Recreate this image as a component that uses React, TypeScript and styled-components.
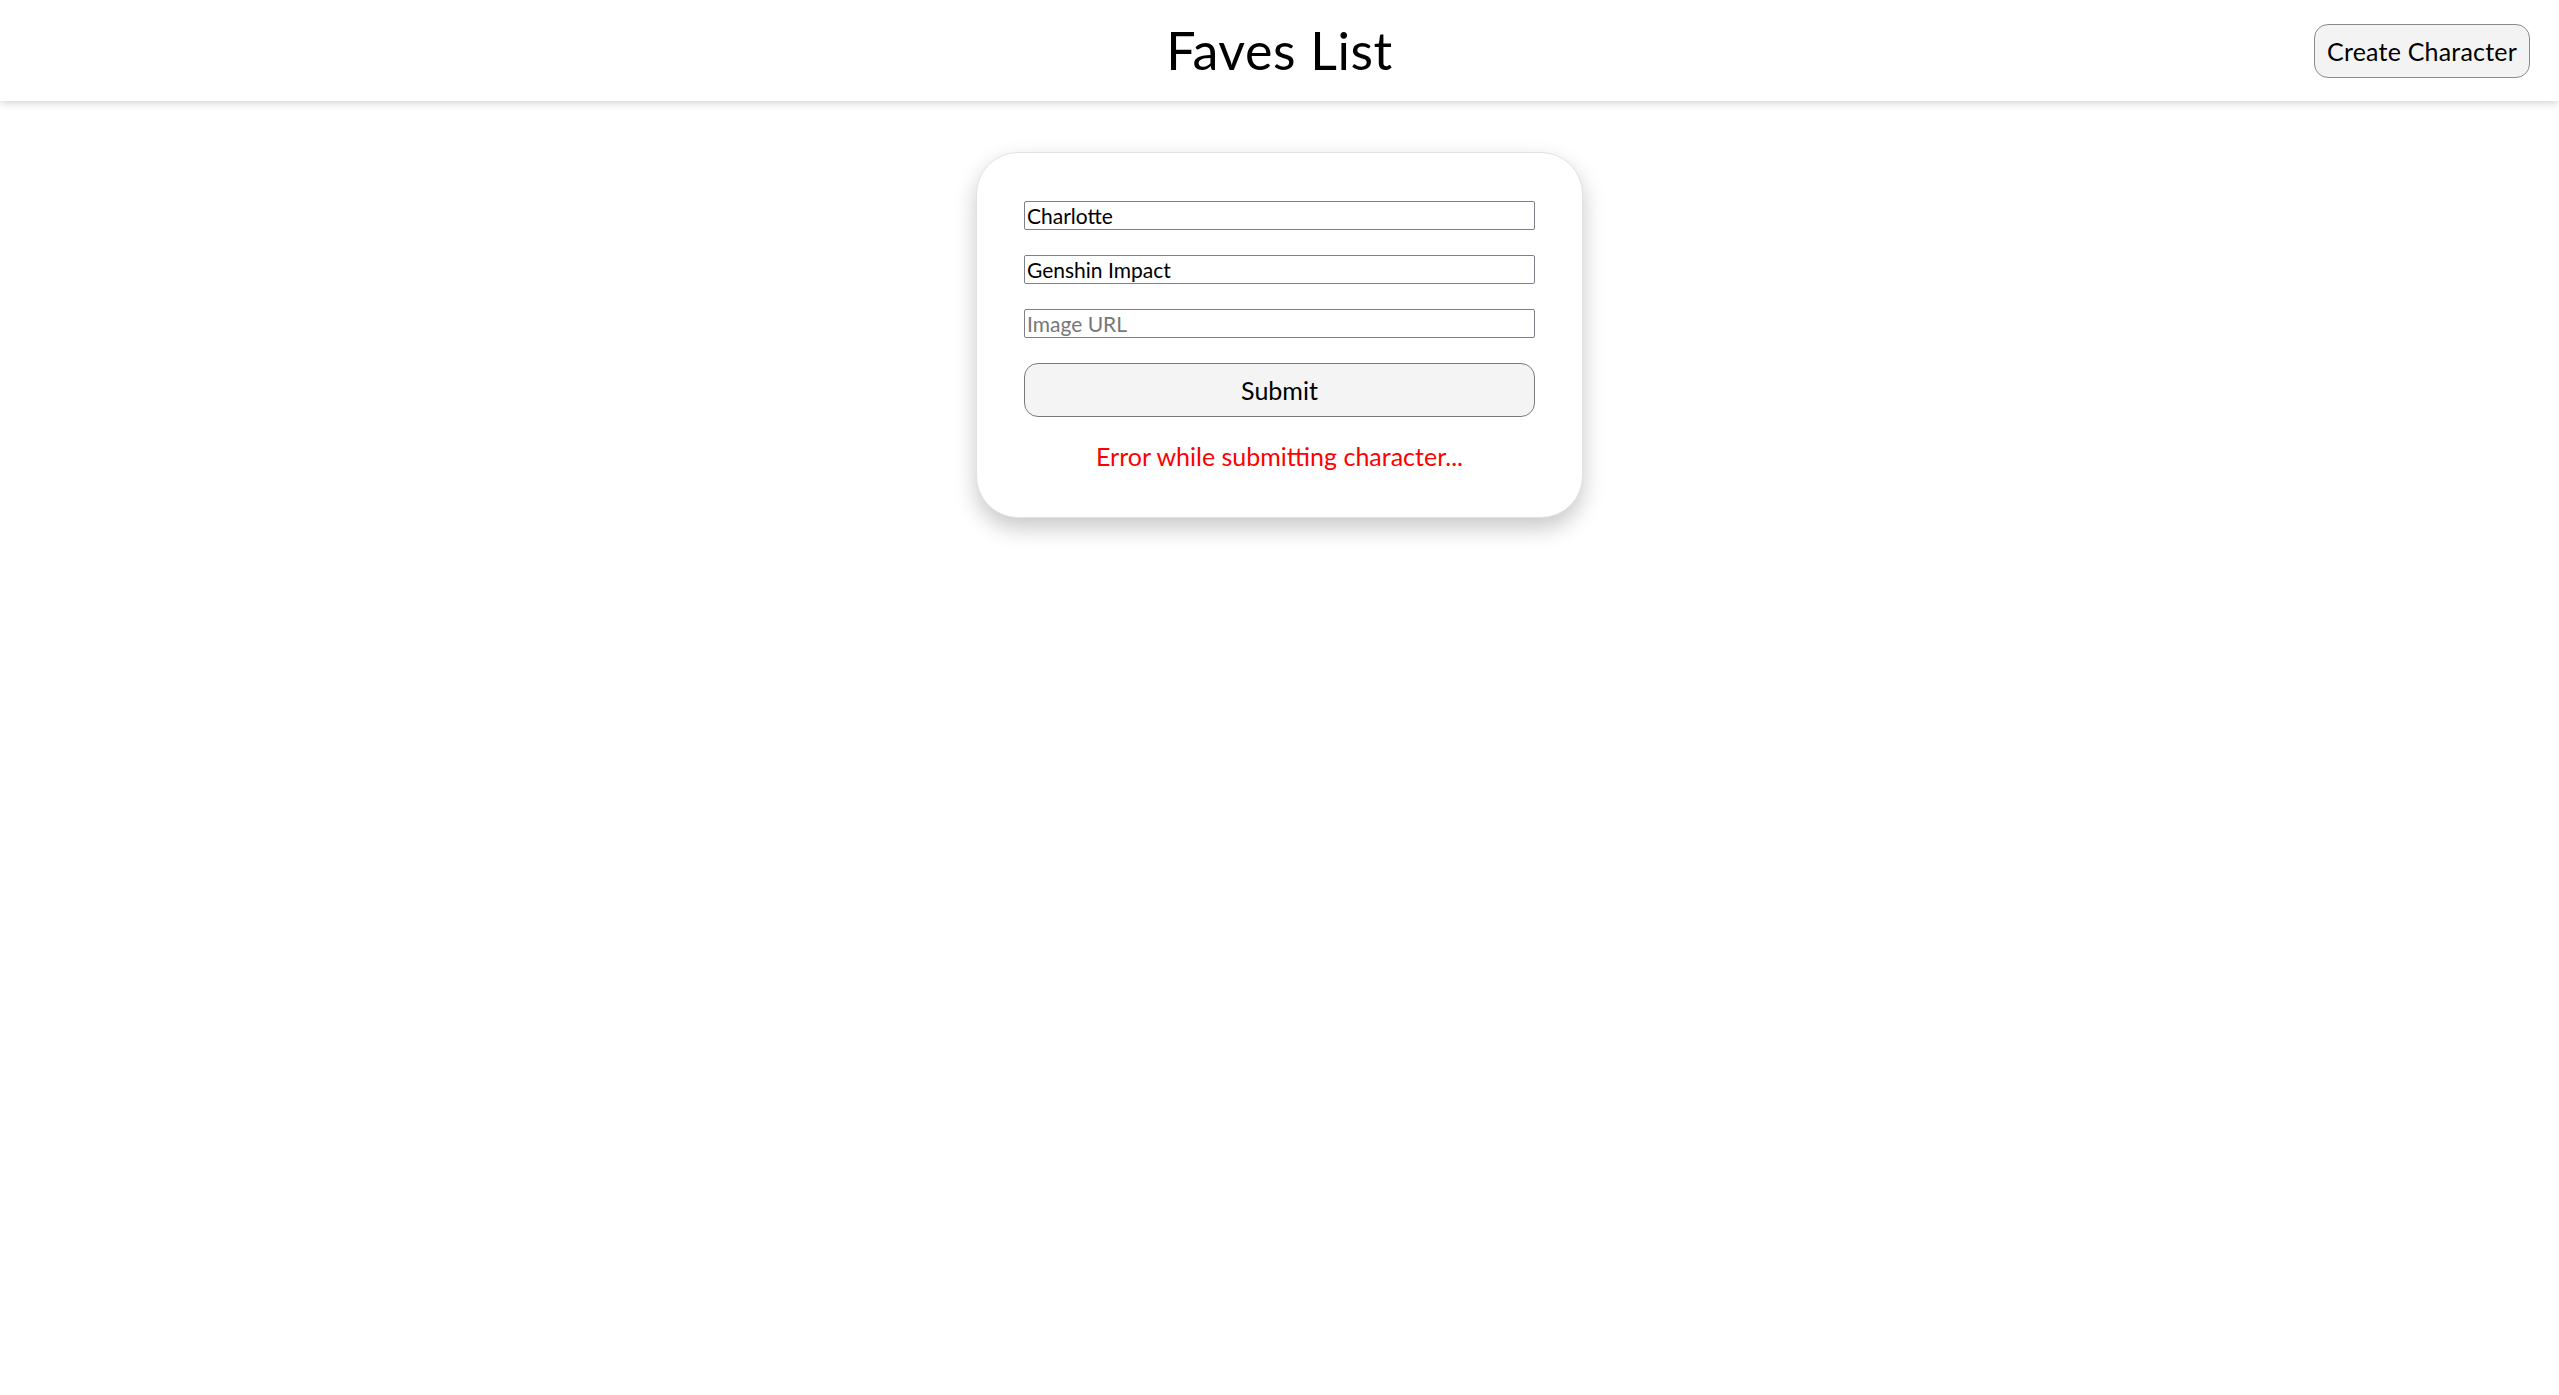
import styled, { createGlobalStyle } from "styled-components";

const GlobalStyle = createGlobalStyle`
  html, body, #root {
    min-height: 100%;
  }
  html {
    height: 100%;
  }
  body {
    margin: 0;
    font-family: Lato, "Liberation Sans", sans-serif;
    background: #fff;
    color: #000;
  }
`;

const Header = styled.header`
  height: 101px;
  display: grid;
  grid-template-columns: 1fr auto 1fr;
  align-items: center;
  padding: 0 29px;
  background: #fff;
  box-shadow: 0 2px 8px rgba(0, 0, 0, 0.18);
  position: relative;
  z-index: 1;
`;

const Title = styled.h1`
  grid-column: 2;
  margin: 0 0 2px;
  font-size: 52px;
  font-weight: 400;
  letter-spacing: 0.6px;
`;

const HeaderButton = styled.button`
  grid-column: 3;
  justify-self: end;
  height: 54px;
  padding: 0 12px;
  font-family: inherit;
  font-size: 25px;
  letter-spacing: 0.2px;
  background: #f3f3f3;
  border: 1px solid #8a8a8a;
  border-radius: 14px;
  color: #000;
`;

const Main = styled.main`
  display: flex;
  justify-content: center;
  padding: 51px 0 120px;
`;

const Card = styled.form`
  width: 607px;
  box-sizing: border-box;
  padding: 48px 47px 46px;
  display: flex;
  flex-direction: column;
  gap: 25px;
  border: 1px solid #e2e2e2;
  border-radius: 42px;
  box-shadow: 0 10px 22px rgba(0, 0, 0, 0.22);
  background: #fff;
`;

const Field = styled.input`
  height: 29px;
  box-sizing: border-box;
  padding: 1px 2px;
  font-family: inherit;
  font-size: 21px;
  border: 1px solid #7f7f8a;
  border-radius: 2px;
  color: #000;
  &::placeholder {
    color: #777;
  }
`;

const Submit = styled.button`
  height: 54px;
  font-family: inherit;
  font-size: 25px;
  background: #f4f4f4;
  border: 1px solid #7a7a7a;
  border-radius: 14px;
  color: #000;
`;

const ErrorText = styled.p`
  margin: 0;
  text-align: center;
  color: #ff0000;
  font-size: 25px;
  line-height: 29px;
`;

export default function App() {
  return (
    <>
      <GlobalStyle />
      <Header>
        <Title>Faves List</Title>
        <HeaderButton>Create Character</HeaderButton>
      </Header>
      <Main>
        <Card onSubmit={(e) => e.preventDefault()}>
          <Field defaultValue="Charlotte" />
          <Field defaultValue="Genshin Impact" />
          <Field placeholder="Image URL" />
          <Submit type="submit">Submit</Submit>
          <ErrorText>Error while submitting character...</ErrorText>
        </Card>
      </Main>
    </>
  );
}
